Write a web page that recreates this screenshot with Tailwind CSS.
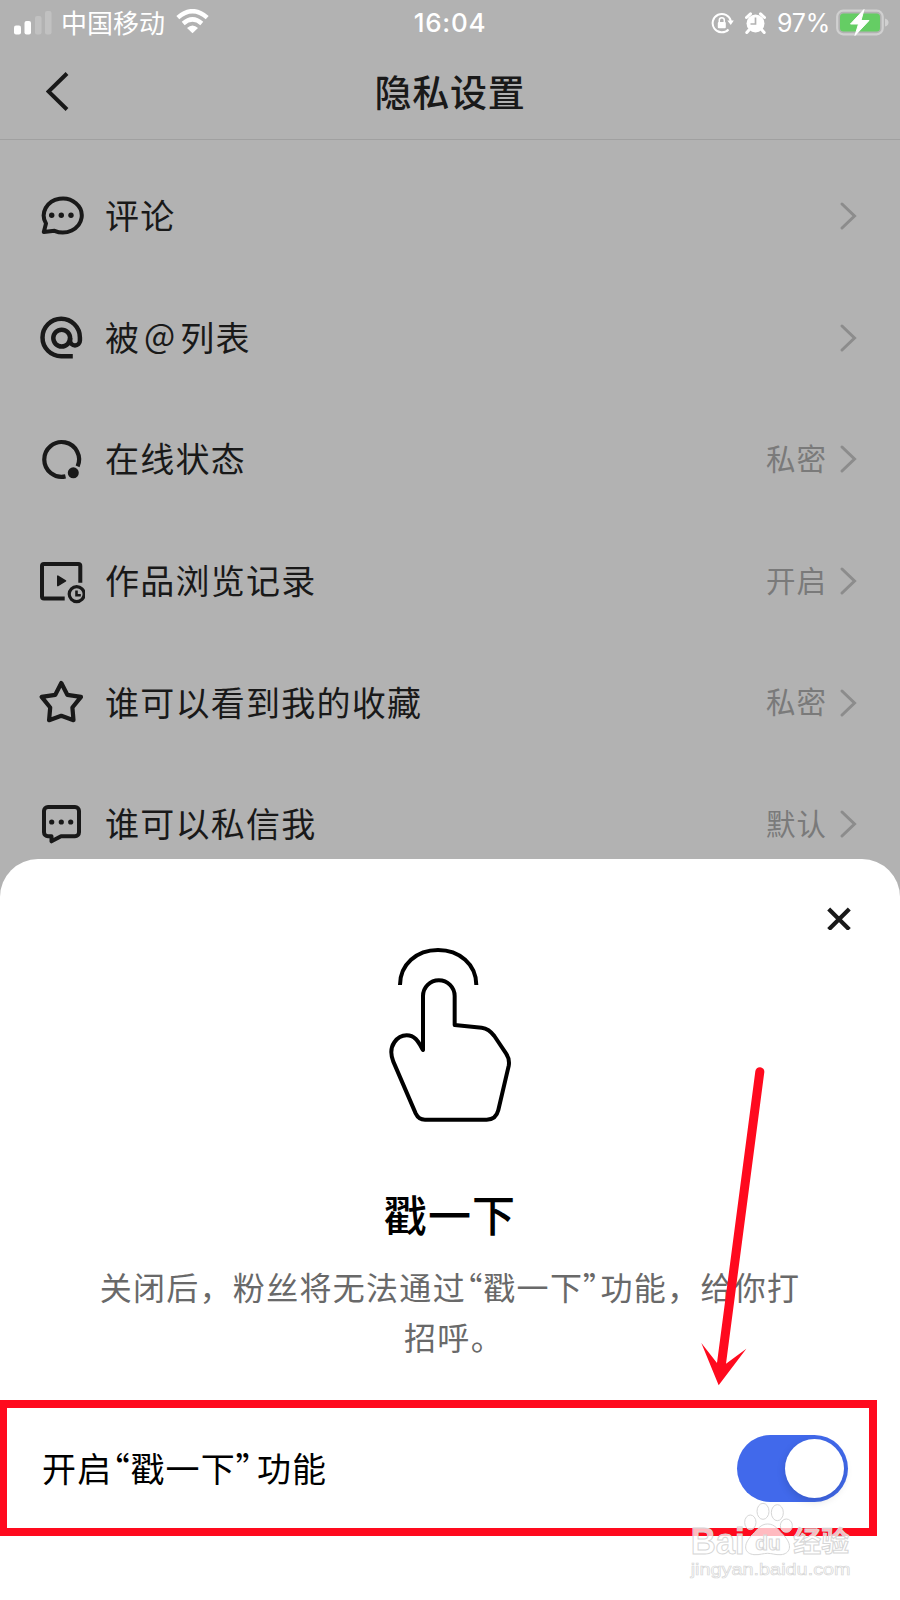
<!DOCTYPE html>
<html lang="zh-CN">
<head>
<meta charset="utf-8">
<title>隐私设置</title>
<script src="https://cdn.jsdelivr.net/npm/@tailwindcss/browser@4"></script>
</head>
<body class="font-['Noto_Sans_CJK_SC','Noto_Sans',sans-serif] bg-[#b2b2b2]">
<div class="relative w-[900px] h-[1600px] overflow-hidden bg-[#b2b2b2] text-[#191919]">

  <!-- Status bar -->
  <div class="h-[46px] flex items-center justify-between pl-[14px] pr-[11px] text-white">
    <div class="w-[300px] flex items-center">
      <svg class="w-[38px] h-[24px]" viewBox="0 0 38 24" fill="#fff"><rect x="0" y="14.500" width="7" height="9" rx="2"/><rect x="10.500" y="10" width="6.500" height="13.500" rx="2"/><g fill="#c1c1c1"><rect x="21" y="5" width="6.500" height="18.500" rx="2"/><rect x="31" y="0" width="6.500" height="23.500" rx="2"/></g></svg>
      <span class="ml-[9px] mb-[2px] text-[26px] leading-[44px]">中国移动</span>
      <svg class="ml-[11px] -mt-[3px] w-[33px] h-[25px]" viewBox="0 0 33 25" fill="none" stroke="#fff" stroke-width="4.400"><path d="M1.800 8.600Q16.500-4.300 31.200 8.600"/><path d="M7.200 14.500Q16.500 6.300 25.800 14.500"/><path d="M11 19Q16.500 14 22 19L16.500 24.300Z" fill="#fff" stroke="none"/></svg>
    </div>
    <span class="-ml-[3px] font-['Inter',sans-serif] font-medium text-[26px] leading-none tracking-[0.700px]">16:04</span>
    <div class="w-[300px] flex items-center justify-end -mt-px">
      <svg class="w-[23px] h-[22px]" viewBox="0 0 23 22" fill="none" stroke="#fff" stroke-width="2"><path d="M17.500 17.500A9.200 9.200 0 1 1 19.800 9"/><path d="M16.300 8.500H22.800L19.800 13Z" fill="#fff" stroke="none"/><rect x="6.800" y="10" width="8" height="6.300" rx="1" fill="#fff" stroke="none"/><path d="M8.300 10.500V8.300a2.500 2.500 0 0 1 5 0V10.500" stroke-width="1.500"/></svg>
      <svg class="ml-[11px] w-[21px] h-[22px]" viewBox="0 0 21 22"><circle cx="10.500" cy="11.500" r="9" fill="#fff"/><path d="M1.500 5.500L5.500 1.800M19.500 5.500L15.500 1.800M4 18L1.800 20.500M17 18L19.200 20.500" stroke="#fff" stroke-width="3" stroke-linecap="round"/><path d="M10.500 5.500V12H5.500" fill="none" stroke="#b2b2b2" stroke-width="1.700"/></svg>
      <span class="ml-[11px] mt-[2px] font-['Inter',sans-serif] text-[25px] leading-none tracking-[-0.200px]">97%</span>
      <svg class="ml-[6px] w-[53px] h-[27px]" viewBox="0 0 53 27"><rect x="1.200" y="1.700" width="45.500" height="23.600" rx="6" fill="none" stroke="#d0d0d0" stroke-width="2.200"/><path d="M49 9.500Q52.500 10.500 52.500 13.500T49 17.500Z" fill="#d0d0d0"/><rect x="4" y="4.500" width="40" height="18" rx="3.500" fill="#65cd64"/><path d="M28 .5L14.500 15H22.500L19 26.500L33 11.500H25Z" fill="#fff" stroke="#fff" stroke-width="1" stroke-linejoin="round"/></svg>
    </div>
  </div>

  <!-- Navigation bar -->
  <div class="h-[94px] flex items-center pl-[46px] pr-[46px] border-b border-[#a0a0a0]">
    <svg class="mb-[2px] w-[26px] h-[40px]" viewBox="0 0 26 40" fill="none" stroke="#191919" stroke-width="4"><path d="M21 1.500L2.500 19.500L21 37.500"/></svg>
    <h1 class="flex-1 mb-[4px] text-center pr-[26px] text-[37px] leading-[50px] font-medium tracking-[0.800px]">隐私设置</h1>
  </div>

  <!-- Settings list -->
  <ul class="pt-[15px] pl-[37px] pr-[43px] text-[34px] tracking-[1.250px]">
    <li class="h-[121.700px] flex items-center">
      <svg class="w-[48px] h-[48px]" viewBox="0 0 48 48" fill="none" stroke="#191919" stroke-width="4" stroke-linejoin="round"><path d="M6.800 40L9 31.500A19 17 0 1 1 17.500 38.800Z"/><g fill="#191919" stroke="none"><circle cx="14.700" cy="23.200" r="2.700"/><circle cx="24.300" cy="23.200" r="2.700"/><circle cx="34" cy="23.200" r="2.700"/></g></svg>
      <span class="flex-1 ml-[20px] mb-[3px]">评论</span>
      <svg class="w-[18px] h-[30px]" viewBox="0 0 18 30" fill="none" stroke="#8c8c8c" stroke-width="3" stroke-linecap="round"><path d="M3 3L15.500 15L3 27"/></svg>
    </li>
    <li class="h-[121.700px] flex items-center">
      <svg class="w-[48px] h-[48px]" viewBox="0 0 48 48" fill="none" stroke="#191919" stroke-width="4.500"><path d="M35.800 42.200H24.200A18.700 18.700 0 1 1 42.900 23.500V26.500a4.900 4.900 0 0 1-9.800 0V24"/><circle cx="24.700" cy="24.100" r="8.400"/></svg>
      <span class="flex-1 ml-[20px] mb-[3px]">被<span class="relative -top-[3px] inline-block w-[40px] text-center text-[33px] leading-none">@</span>列表</span>
      <svg class="w-[18px] h-[30px]" viewBox="0 0 18 30" fill="none" stroke="#8c8c8c" stroke-width="3" stroke-linecap="round"><path d="M3 3L15.500 15L3 27"/></svg>
    </li>
    <li class="h-[121.700px] flex items-center">
      <svg class="w-[48px] h-[48px]" viewBox="0 0 48 48" fill="none" stroke="#191919" stroke-width="4.200"><path d="M28.500 41.400A17.400 17.400 0 1 1 40.600 31.400"/><circle cx="36.300" cy="37.800" r="5.500" fill="#191919" stroke="none"/></svg>
      <span class="flex-1 ml-[20px] mb-[3px]">在线状态</span>
      <span class="mr-[12px] mb-[4px] text-[29.500px] tracking-[1px] text-[#7a7a7a]">私密</span>
      <svg class="w-[18px] h-[30px]" viewBox="0 0 18 30" fill="none" stroke="#8c8c8c" stroke-width="3" stroke-linecap="round"><path d="M3 3L15.500 15L3 27"/></svg>
    </li>
    <li class="h-[121.700px] flex items-center">
      <svg class="w-[48px] h-[48px]" viewBox="0 0 48 48" fill="none" stroke="#191919" stroke-width="4"><path d="M43.300 25.700V9.100a2 2 0 0 0-2-2H7a2 2 0 0 0-2 2V39.400a2 2 0 0 0 2 2H27.700"/><path d="M20.800 19.200V28.600L28.500 23.900Z" fill="#191919" stroke-width="1.600" stroke-linejoin="round"/><circle cx="39.700" cy="37.100" r="7.500" stroke-width="3.200"/><path d="M39.500 33.500V38.300H43.800" stroke-width="2.600"/></svg>
      <span class="flex-1 ml-[20px] mb-[3px]">作品浏览记录</span>
      <span class="mr-[12px] mb-[4px] text-[29.500px] tracking-[1px] text-[#7a7a7a]">开启</span>
      <svg class="w-[18px] h-[30px]" viewBox="0 0 18 30" fill="none" stroke="#8c8c8c" stroke-width="3" stroke-linecap="round"><path d="M3 3L15.500 15L3 27"/></svg>
    </li>
    <li class="h-[121.700px] flex items-center">
      <svg class="w-[48px] h-[48px]" viewBox="0 0 48 48" fill="none" stroke="#191919" stroke-width="4.200" stroke-linejoin="round"><path d="M24.300 4L30.300 15.800L44 17.900L35.400 28.500L36.500 41.200L24.300 36.800L12.100 41.200L13.200 28.500L4.600 17.900L18.300 15.800Z"/></svg>
      <span class="flex-1 ml-[20px] mb-[3px]">谁可以看到我的收藏</span>
      <span class="mr-[12px] mb-[4px] text-[29.500px] tracking-[1px] text-[#7a7a7a]">私密</span>
      <svg class="w-[18px] h-[30px]" viewBox="0 0 18 30" fill="none" stroke="#8c8c8c" stroke-width="3" stroke-linecap="round"><path d="M3 3L15.500 15L3 27"/></svg>
    </li>
    <li class="h-[121.700px] flex items-center">
      <svg class="w-[48px] h-[48px]" viewBox="0 0 48 48" fill="none" stroke="#191919" stroke-width="4" stroke-linejoin="round"><path d="M11 7H38a4 4 0 0 1 4 4V32.300a4 4 0 0 1-4 4H24L14.500 41.300V36.300H11a4 4 0 0 1-4-4V11a4 4 0 0 1 4-4Z"/><g fill="#191919" stroke="none"><circle cx="14.700" cy="22" r="2.600"/><circle cx="24.300" cy="22" r="2.600"/><circle cx="33.700" cy="22" r="2.600"/></g></svg>
      <span class="flex-1 ml-[20px] mb-[3px]">谁可以私信我</span>
      <span class="mr-[12px] mb-[4px] text-[29.500px] tracking-[1px] text-[#7a7a7a]">默认</span>
      <svg class="w-[18px] h-[30px]" viewBox="0 0 18 30" fill="none" stroke="#8c8c8c" stroke-width="3" stroke-linecap="round"><path d="M3 3L15.500 15L3 27"/></svg>
    </li>
  </ul>

  <!-- Bottom sheet -->
  <section class="absolute inset-x-0 bottom-0 h-[741px] bg-white rounded-t-[38px] flex flex-col items-center">
    <div class="w-full h-[71px] flex justify-end items-end pr-[49px]">
      <svg class="w-[24px] h-[24px]" viewBox="0 0 24 24" fill="none" stroke="#191919" stroke-width="4.200"><path d="M1.700 3L22.300 23.500M22.300 3L1.700 23.500"/></svg>
    </div>
    <svg class="w-[160px] h-[200px]" viewBox="0 0 480 600" fill="none" stroke="#000" stroke-width="12" stroke-linejoin="round"><path d="M90 165C90 103 140 60 204 60S319 103 319 165"/><path d="M159 360V198A47.500 47.500 0 0 1 254 198V285L335 293Q357 296 373 318L408 370Q420 388 416 408L385 540Q378 569 350 569H165Q146 569 137 550L70 395C50 345 85 316 110 316C138 316 147 340 159 360Z"/></svg>
    <h2 class="mt-[52px] h-[62px] text-[43px] leading-[62px] font-medium tracking-[1.200px] text-black">戳一下</h2>
    <p class="mt-[18px] text-center whitespace-nowrap text-[32px] leading-[49.500px] tracking-[1.300px] text-[#696969]">关闭后，粉丝将无法通过<span class="[font-feature-settings:'palt']">“</span>戳一下<span class="[font-feature-settings:'palt']">”</span>功能，给你打<br><span class="pl-[8px]">招呼。</span></p>
    <div class="mt-[74px] w-full h-[67px] flex shrink-0 items-center justify-between pl-[42px] pr-[52px] text-[34px] tracking-[1.150px] text-black">
      <span class="mb-[3px]">开启<span class="[font-feature-settings:'palt']">“</span>戳一下<span class="[font-feature-settings:'palt'] tracking-[4px]">”</span>功能</span>
      <div class="w-[111px] h-[67px] rounded-full bg-[#4169eb] flex items-center justify-end pr-[4px]">
        <div class="w-[59px] h-[59px] rounded-full bg-white shadow-[0_3px_8px_rgba(0,0,0,0.15)]"></div>
      </div>
    </div>
  </section>

  <!-- Annotations -->
  <div class="absolute left-[-1px] top-[1400px] w-[878px] h-[136px] border-[8.500px] border-[#ff0a1e]"></div>
  <svg class="absolute left-[680px] top-[1050px] w-[120px] h-[350px]" viewBox="0 0 360 1050" fill="#ff0a1e"><path d="M226 64A13 13 0 0 1 253 66L138 941L199 896L116 1006L64 879L111 939Z"/></svg>

  <!-- Watermark -->
  <svg class="absolute left-[670px] top-[1490px] w-[230px] h-[110px]" viewBox="0 300 690 330" fill="#fff" fill-opacity=".72" stroke="#d6d6d6" stroke-width="3">
    <ellipse cx="241" cy="397" rx="17" ry="22"/><ellipse cx="279" cy="364" rx="18" ry="24"/><ellipse cx="322" cy="368" rx="18" ry="24"/><ellipse cx="349" cy="407" rx="18" ry="20"/>
    <path d="M293 402C315 402 322 418 338 433C372 466 359 492 333 494C315 495 306 490 293 490S270 495 252 494C224 491 215 466 248 433C264 418 271 402 293 402Z"/>
    <text x="62" y="491" font-family="Liberation Sans" font-weight="700" font-size="108" textLength="162" lengthAdjust="spacingAndGlyphs">Bai</text>
    <text x="256" y="480" font-family="Liberation Sans" font-weight="700" font-size="60" textLength="76" lengthAdjust="spacingAndGlyphs">du</text>
    <text x="370" y="485" font-family="Noto Sans CJK SC" font-weight="700" font-size="84" textLength="168">经验</text>
    <text x="62" y="555" font-family="Liberation Sans" font-size="52" textLength="480" lengthAdjust="spacingAndGlyphs" stroke-width="2">jingyan.baidu.com</text>
  </svg>
</div>
</body>
</html>
